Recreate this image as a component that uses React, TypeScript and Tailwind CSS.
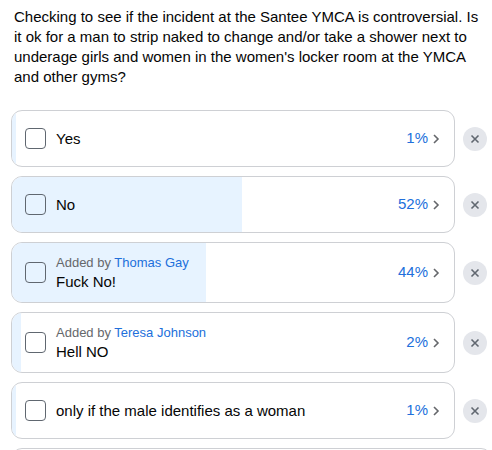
const options = [
  { label: "Yes", pct: 1 },
  { label: "No", pct: 52 },
  { label: "Fuck No!", pct: 44, by: "Thomas Gay" },
  { label: "Hell NO", pct: 2, by: "Teresa Johnson" },
  { label: "only if the male identifies as a woman", pct: 1 },
];

const Row = ({ label, pct, by }: { label: string; pct: number; by?: string }) => {
  return (
    <div className="flex items-center">
      <div
        className={`relative flex-1 border border-[#ced0d4] rounded-[11px] overflow-hidden ${
          by ? "h-[61px]" : "h-[57px]"
        }`}
      >
        <div className="absolute inset-y-0 left-0 bg-[#e7f3ff]" style={{ width: `${Math.max(pct, 0.8)}%` }} />
        <div className="relative flex items-center h-full pl-[13px] pr-[14px]">
          <div className="w-[21px] h-[21px] rounded-[4px] border-[1.5px] border-[#606770] shrink-0" />
          <div className="ml-[10px] flex-1 flex flex-col leading-[20px]">
            {by && (
              <div className="text-[13px] leading-[18px] text-[#65676b]">
                Added by <span className="text-[#216fdb]">{by}</span>
              </div>
            )}
            <div className="text-[15px] text-[#050505]">{label}</div>
          </div>
          <div className="text-[15px] text-[#216fdb]">{pct}%</div>
          <svg width="8" height="12" viewBox="0 0 8 12" className="ml-[4px]">
            <path d="M2 2l4 4-4 4" fill="none" stroke="#65676b" strokeWidth="1.6" />
          </svg>
        </div>
      </div>
      <div className="w-[24px] h-[24px] ml-[8px] mr-[5px] rounded-full bg-[#e4e6eb] flex items-center justify-center">
        <svg width="10" height="10" viewBox="0 0 10 10">
          <path d="M1.5 1.5l7 7M8.5 1.5l-7 7" stroke="#606770" strokeWidth="1.6" />
        </svg>
      </div>
    </div>
  );
};

export default function App() {
  return (
    <div className="w-[492px] h-[450px] overflow-hidden bg-white font-['Segoe_UI','Liberation_Sans',sans-serif]">
      <p className="pl-[14px] pr-[6px] pt-[7px] text-[15px] leading-[20px] text-[#050505]">
        Checking to see if the incident at the Santee YMCA is controversial. Is it ok for a man to strip naked to
        change and/or take a shower next to underage girls and women in the women's locker room at the YMCA and other
        gyms?
      </p>
      <div className="mt-[23px] pl-[11px] flex flex-col gap-[9px]">
        {options.map((o) => (
          <Row key={o.label} {...o} />
        ))}
        <div className="h-[40px] border border-[#ced0d4] rounded-[11px]" />
      </div>
    </div>
  );
}
